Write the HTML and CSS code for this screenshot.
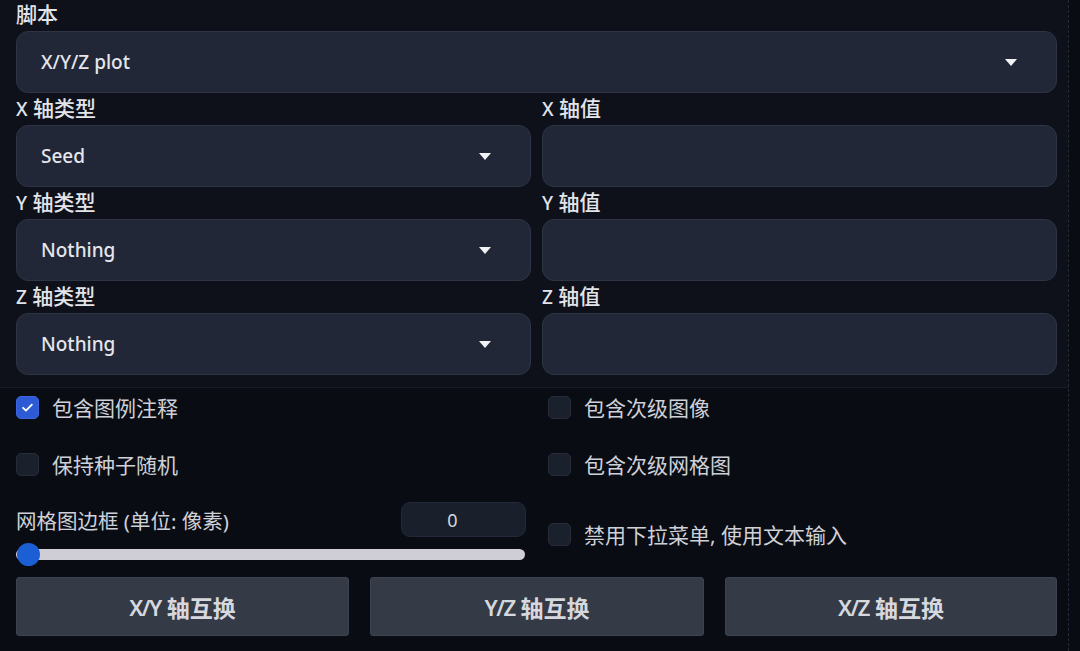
FILE: index.html
```html
<!DOCTYPE html>
<html lang="zh">
<head>
<meta charset="utf-8">
<link rel="stylesheet" href="styles.css">
</head>
<body>
<div class="page">
  <section class="upper">
    <div class="field">
      <div class="label">脚本</div>
      <div class="select"><span>X/Y/Z plot</span><i class="caret"></i></div>
    </div>
    <div class="grid2">
      <div class="field">
        <div class="label"><span class="lat">X</span> 轴类型</div>
        <div class="select"><span>Seed</span><i class="caret"></i></div>
      </div>
      <div class="field">
        <div class="label"><span class="lat">X</span> 轴值</div>
        <div class="textbox"></div>
      </div>
      <div class="field">
        <div class="label"><span class="lat">Y</span> 轴类型</div>
        <div class="select"><span>Nothing</span><i class="caret"></i></div>
      </div>
      <div class="field">
        <div class="label"><span class="lat">Y</span> 轴值</div>
        <div class="textbox"></div>
      </div>
      <div class="field">
        <div class="label"><span class="lat">Z</span> 轴类型</div>
        <div class="select"><span>Nothing</span><i class="caret"></i></div>
      </div>
      <div class="field">
        <div class="label"><span class="lat">Z</span> 轴值</div>
        <div class="textbox"></div>
      </div>
    </div>
  </section>
  <section class="lower">
    <div class="col left">
      <label class="check"><span class="box checked"><svg viewBox="0 0 24 24" width="15" height="15"><path d="M5 12.5l4.5 4.5L19 7.5" fill="none" stroke="#fff" stroke-width="3" stroke-linecap="round" stroke-linejoin="round"/></svg></span><span class="ctext">包含图例注释</span></label>
      <label class="check row2"><span class="box"></span><span class="ctext">保持种子随机</span></label>
      <div class="slider-block">
        <div class="slider-head">
          <span class="stext">网格图边框 (单位: 像素)</span>
          <div class="num">0</div>
        </div>
        <div class="slider"><span class="thumb"></span></div>
      </div>
    </div>
    <div class="col right">
      <label class="check"><span class="box"></span><span class="ctext">包含次级图像</span></label>
      <label class="check row2"><span class="box"></span><span class="ctext">包含次级网格图</span></label>
      <label class="check row3"><span class="box"></span><span class="ctext">禁用下拉菜单, 使用文本输入</span></label>
    </div>
  </section>
  <section class="buttons">
    <div class="btn"><span class="blat">X/Y</span>&nbsp;轴互换</div>
    <div class="btn"><span class="blat">Y/Z</span>&nbsp;轴互换</div>
    <div class="btn"><span class="blat">X/Z</span>&nbsp;轴互换</div>
  </section>
</div>
</body>
</html>
```

FILE: styles.css
```css
html, body {
  margin: 0;
  padding: 0;
  background: #0a0c13;
  height: 651px;
  overflow: hidden;
}
body {
  font-family: "Noto Sans", "Noto Sans CJK SC", sans-serif;
  color: #d9dbe1;
}
.page {
  width: 1041px;
  height: 651px;
  padding: 0 11px 0 16px;
  border-right: 1px dashed #262b38;
  box-sizing: content-box;
}
.upper {
  background: #0e111a;
  margin-left: -16px;
  margin-right: -11px;
  padding: 1px 11px 12px 16px;
  border-bottom: 1px solid #171b26;
}
.field {
  display: flex;
  flex-direction: column;
}
.label {
  height: 26px;
  line-height: 26px;
  font-size: 21px;
  font-weight: 500;
  color: #e2e4ea;
  margin-bottom: 4px;
  white-space: nowrap;
}
.lat {
  font-size: 19px;
}
.grid2 {
  display: grid;
  grid-template-columns: 515px 515px;
  column-gap: 11px;
  row-gap: 2px;
  margin-top: 2px;
}
.select, .textbox {
  height: 62px;
  box-sizing: border-box;
  background: #212736;
  border: 1px solid #2d3444;
  border-radius: 12px;
  display: flex;
  align-items: center;
  padding: 0 40px 0 24px;
  position: relative;
  font-size: 19px;
  font-weight: 500;
  color: #e4e6ec;
}
.caret {
  position: absolute;
  right: 39px;
  top: 27px;
  width: 0;
  height: 0;
  border-left: 6px solid transparent;
  border-right: 6px solid transparent;
  border-top: 7px solid #f2f3f6;
}
.lower {
  display: grid;
  grid-template-columns: 526px 515px;
  height: 189px;
}
.col {
  display: flex;
  flex-direction: column;
}
.right {
  padding-left: 6px;
}
.check {
  display: flex;
  align-items: center;
  gap: 13px;
  height: 23px;
  margin-top: 8px;
}
.check.row2 {
  margin-top: 34px;
}
.check.row3 {
  margin-top: 47px;
}
.box {
  width: 23px;
  height: 23px;
  box-sizing: border-box;
  border-radius: 5px;
  background: #1b202d;
  border: 1px solid #262c3a;
  display: flex;
  align-items: center;
  justify-content: center;
  flex: none;
}
.box.checked {
  background: #2d5bd6;
  border-color: #3a66df;
}
.ctext {
  font-size: 21px;
  color: #cfd1d8;
  white-space: nowrap;
  margin-top: -2px;
}
.slider-block {
  margin-top: 26px;
  width: 510px;
  display: flex;
  flex-direction: column;
}
.slider-head {
  display: flex;
  align-items: center;
  justify-content: space-between;
  height: 35px;
}
.stext {
  font-size: 20.5px;
  color: #cfd1d8;
  white-space: nowrap;
}
.num {
  width: 125px;
  height: 35px;
  box-sizing: border-box;
  background: #1a1f2c;
  border: 1px solid #232938;
  border-radius: 9px;
  display: flex;
  align-items: center;
  justify-content: center;
  padding-right: 22px;
  font-size: 18px;
  color: #d5d7de;
}
.slider {
  margin-top: 12px;
  height: 11px;
  width: 509px;
  border-radius: 6px;
  background: #cfced6;
  position: relative;
}
.thumb {
  position: absolute;
  left: 1px;
  top: -6px;
  width: 23px;
  height: 23px;
  border-radius: 50%;
  background: #1c5fd4;
}
.buttons {
  display: grid;
  grid-template-columns: 333px 334px 332px;
  column-gap: 21px;
}
.btn {
  height: 59px;
  background: #353a47;
  border: 1px solid #3c4250;
  box-sizing: border-box;
  border-radius: 3px;
  display: flex;
  align-items: center;
  justify-content: center;
  font-size: 23px;
  font-weight: 700;
  color: #d6d8de;
}
.blat {
  font-size: 22px;
  font-weight: 600;
  letter-spacing: -1.5px;
}
```
